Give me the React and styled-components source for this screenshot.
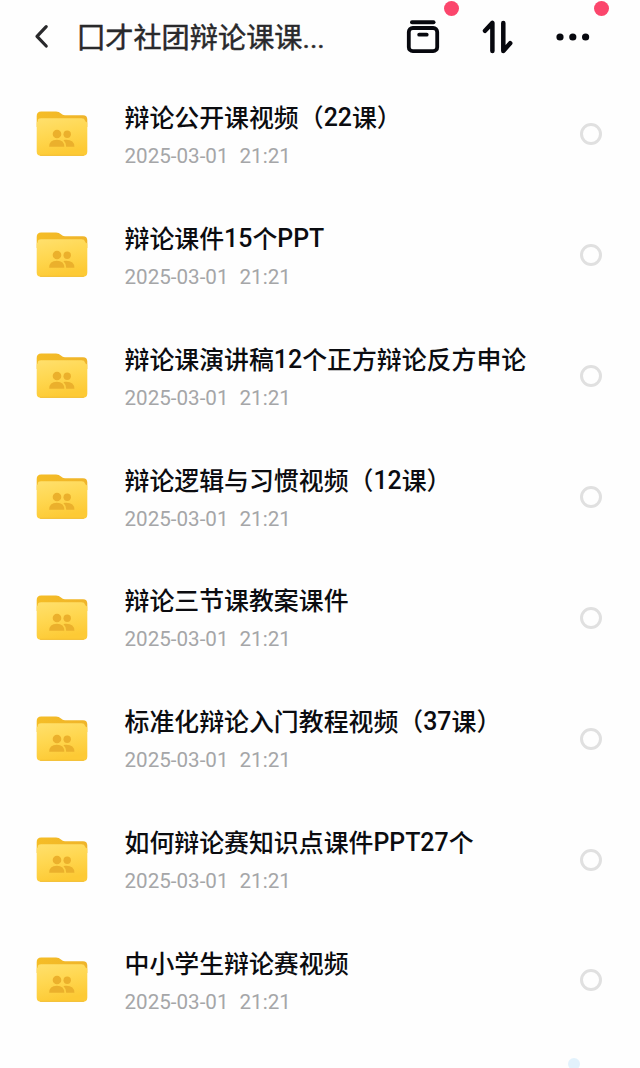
import React from "react";
import styled, { createGlobalStyle } from "styled-components";

const folders = [
  { name: "辩论公开课视频（22课）", date: "2025-03-01  21:21" },
  { name: "辩论课件15个PPT", date: "2025-03-01  21:21" },
  { name: "辩论课演讲稿12个正方辩论反方申论", date: "2025-03-01  21:21" },
  { name: "辩论逻辑与习惯视频（12课）", date: "2025-03-01  21:21" },
  { name: "辩论三节课教案课件", date: "2025-03-01  21:21" },
  { name: "标准化辩论入门教程视频（37课）", date: "2025-03-01  21:21" },
  { name: "如何辩论赛知识点课件PPT27个", date: "2025-03-01  21:21" },
  { name: "中小学生辩论赛视频", date: "2025-03-01  21:21" },
];

const BackIcon = () => (
  <svg width="16" height="26" viewBox="0 0 16 26" fill="none">
    <path
      d="M13.2 2.6 L4 12.3 L13.2 22"
      stroke="#29292b"
      strokeWidth="3.2"
      strokeLinecap="round"
      strokeLinejoin="round"
    />
  </svg>
);

const BoxIcon = () => (
  <svg width="34" height="34" viewBox="0 0 34 34" fill="none" stroke="#07080e">
    <path d="M6 2.2 H27.5" strokeWidth="4" strokeLinecap="round" />
    <rect x="2.8" y="8" width="28.4" height="23.2" rx="4" strokeWidth="3.8" />
    <path d="M13.2 14.7 H20.7" strokeWidth="3.8" strokeLinecap="round" />
  </svg>
);

const SortIcon = () => (
  <svg width="32" height="34" viewBox="0 0 32 34" fill="none">
    <path
      d="M3 10.8 L10.4 2.9 V31 M21.3 2.9 V31 L28.2 23.2"
      stroke="#07080e"
      strokeWidth="4.5"
      strokeLinecap="round"
      strokeLinejoin="round"
    />
  </svg>
);

const MoreIcon = () => (
  <svg width="34" height="8" viewBox="0 0 34 8" fill="#07080e">
    <circle cx="4" cy="4" r="3.6" />
    <circle cx="16.8" cy="4" r="3.6" />
    <circle cx="29.6" cy="4" r="3.6" />
  </svg>
);

const FolderIcon = () => (
  <svg width="52" height="46" viewBox="0 0 52 46">
    <defs>
      <linearGradient id="folderBack" x1="0" y1="0" x2="1" y2="0">
        <stop offset="0" stopColor="#f5bd26" />
        <stop offset="1" stopColor="#efb42a" />
      </linearGradient>
      <linearGradient id="folderFront" x1="0" y1="0" x2="0.3" y2="1">
        <stop offset="0" stopColor="#ffe06d" />
        <stop offset="0.5" stopColor="#ffd750" />
        <stop offset="1" stopColor="#fdca35" />
      </linearGradient>
    </defs>
    <path
      d="M0.7 12 V5 Q0.7 0.5 5.2 0.5 H20 Q23 0.5 25 2.4 L26.3 3.5 Q27.3 4.2 29 4.2 H47 Q51.3 4.2 51.3 8.5 V16 H0.7 Z"
      fill="url(#folderBack)"
    />
    <path
      d="M0.7 15 V11.5 Q1.8 11 1.8 9.5 Q2 7.2 5 7.2 H45.5 Q48.5 7.2 49 9.5 Q49.3 11 51.3 11.5 V40.5 Q51.3 44.8 47 44.8 H5 Q0.7 44.8 0.7 40.5 Z"
      fill="url(#folderFront)"
    />
    <path d="M4.5 44.3 H47.5" stroke="#f2bd32" strokeWidth="1" strokeLinecap="round" />
    <g fill="#ebb02c">
      <circle cx="21" cy="23" r="4.3" />
      <circle cx="31.2" cy="23.3" r="3.7" />
      <path d="M13.2 35.7 Q13.2 28.7 20.8 28.7 Q28.3 28.7 28.3 35.7 Z" />
      <path d="M27.4 28.9 Q38.4 27.6 38.4 35.7 H30.2 Q30.2 31.5 27.4 28.9 Z" />
    </g>
  </svg>
);

// latin letters and digits sit slightly above the CJK baseline
const renderName = (name) =>
  name
    .split(/([A-Z0-9]+)/)
    .map((part, i) => (i % 2 ? <Latin key={i}>{part}</Latin> : part));

const App = () => {
  return (
    <Page>
      <GlobalStyle />
      <Header>
        <BackButton aria-label="返回">
          <BackIcon />
        </BackButton>
        <Title>囗才社团辩论课课...</Title>
        <Actions>
          <Action $width={34}>
            <BoxIcon />
            <Badge $left={38} />
          </Action>
          <Action $width={32}>
            <SortIcon />
          </Action>
          <Action $width={34}>
            <MoreIcon />
            <Badge $left={38} />
          </Action>
        </Actions>
      </Header>
      <List>
        {folders.map((folder) => (
          <Row key={folder.name}>
            <FolderIcon />
            <Info>
              <Name>{renderName(folder.name)}</Name>
              <DateText>{folder.date}</DateText>
            </Info>
            <Radio />
          </Row>
        ))}
      </List>
      <Peek />
    </Page>
  );
};

export default App;

const GlobalStyle = createGlobalStyle`
  * {
    box-sizing: border-box;
  }
  body {
    margin: 0;
    background: #fefefe;
    font-family: Roboto, "Noto Sans CJK SC", sans-serif;
  }
`;

const Page = styled.div`
  position: relative;
  width: 640px;
  height: 1068px;
  overflow: hidden;
  background: #fefefe;
`;

const Header = styled.header`
  display: flex;
  align-items: center;
  height: 74px;
  padding-left: 33px;
`;

const BackButton = styled.button`
  display: flex;
  width: 44px;
  padding: 0;
  border: 0;
  background: none;
`;

const Title = styled.h1`
  width: 329px;
  margin: 0;
  padding-top: 3px;
  font-size: 28.2px;
  font-weight: 400;
  line-height: 40px;
  white-space: nowrap;
  color: #29292b;
  -webkit-text-stroke: 0.45px #29292b;
`;

const Actions = styled.div`
  display: flex;
  align-items: center;
  gap: 42px;
`;

const Action = styled.div`
  position: relative;
  display: flex;
  align-items: center;
  width: ${(props) => props.$width}px;
  height: 74px;
`;

const Badge = styled.span`
  position: absolute;
  top: 0.5px;
  left: ${(props) => props.$left}px;
  width: 15px;
  height: 15px;
  border-radius: 50%;
  background: #fb466c;
`;

const List = styled.ul`
  margin: 0;
  padding: 0;
  list-style: none;
`;

const Row = styled.li`
  display: flex;
  align-items: center;
  height: 120.86px;
  padding: 0 38px 0 36px;
`;

const Info = styled.div`
  flex: 1;
  margin-left: 36.5px;
  padding-top: 6px;
`;

const Name = styled.div`
  font-size: 24.9px;
  font-weight: 500;
  line-height: 38px;
  white-space: nowrap;
  color: #0b0c10;
`;

const Latin = styled.span`
  line-height: 1;
  vertical-align: 1px;
`;

const DateText = styled.div`
  font-size: 20.6px;
  line-height: 37px;
  white-space: pre;
  word-spacing: 0.4px;
  color: #a5a6a8;
`;

const Radio = styled.span`
  width: 22px;
  height: 22px;
  border: 3px solid #e0e0e0;
  border-radius: 50%;
`;

// top edge of the floating button just below the fold
const Peek = styled.span`
  position: absolute;
  left: 568px;
  top: 1058px;
  width: 12px;
  height: 12px;
  border-radius: 50%;
  background: #e2f2fc;
`;
